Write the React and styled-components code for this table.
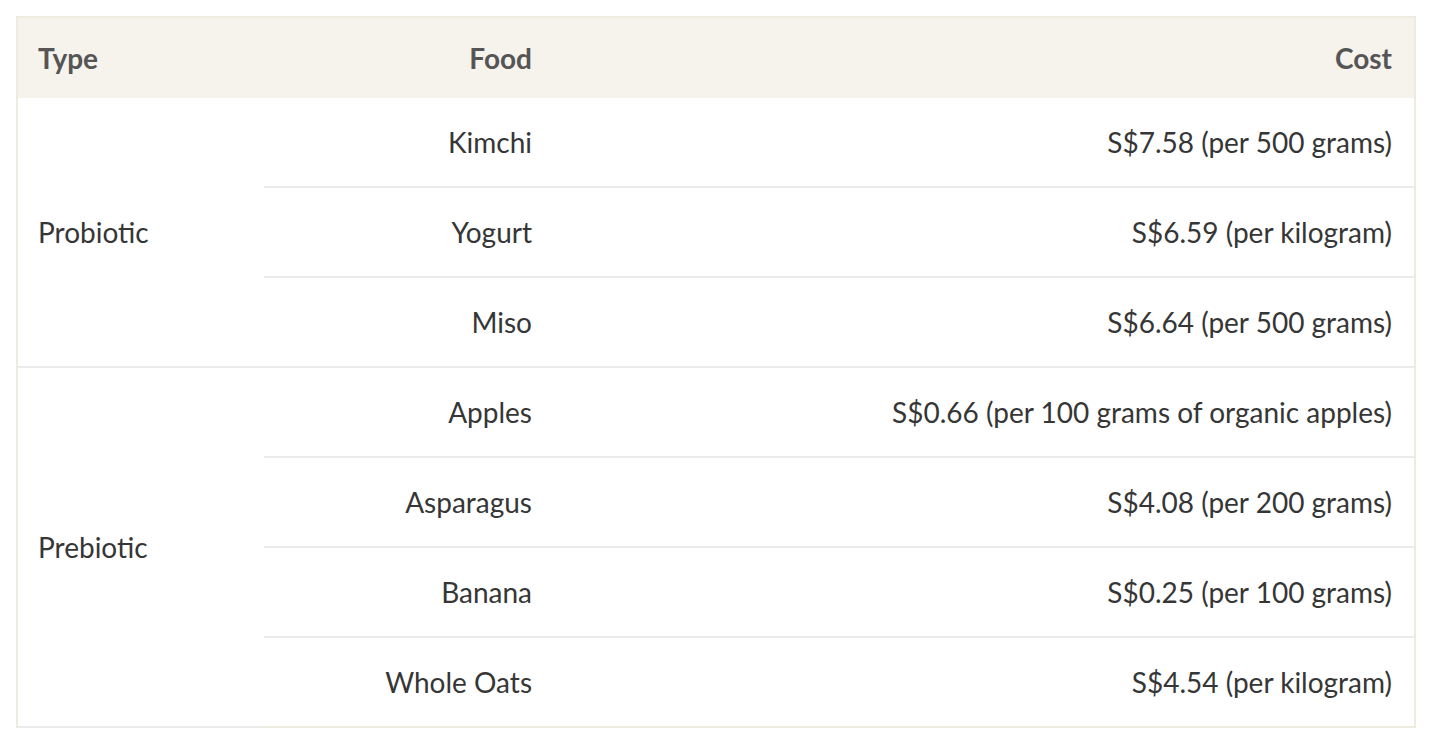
import React from "react";
import styled, { createGlobalStyle } from "styled-components";

const Global = createGlobalStyle`
  html, body { margin: 0; padding: 0; background: #ffffff; }
  body { font-family: Lato, "Noto Sans", "Liberation Sans", sans-serif; }
`;

const Page = styled.div`
  padding: 16px;
`;

const Table = styled.table`
  width: 1400px;
  border-collapse: collapse;
  border: 2px solid #eeebe1;
  table-layout: fixed;
  font-size: 28px;
  color: #363636;
`;

const Head = styled.th`
  background: #f5f3ec;
  height: 80px;
  padding: 0 22px 0 20px;
  font-weight: 700;
  color: #555555;
  text-align: ${(p) => p.$align || "left"};
  vertical-align: middle;
`;

const Cell = styled.td`
  height: 88px;
  padding: 0 22px 0 20px;
  border-bottom: 2px solid #ebebeb;
  text-align: ${(p) => p.$align || "left"};
  vertical-align: middle;
  white-space: nowrap;
`;

const Row = styled.tr`
  &:last-child > td {
    border-bottom: 0;
  }
`;

const groups = [
  {
    type: "Probiotic",
    items: [
      ["Kimchi", "S$7.58 (per 500 grams)"],
      ["Yogurt", "S$6.59 (per kilogram)"],
      ["Miso", "S$6.64 (per 500 grams)"],
    ],
  },
  {
    type: "Prebiotic",
    items: [
      ["Apples", "S$0.66 (per 100 grams of organic apples)"],
      ["Asparagus", "S$4.08 (per 200 grams)"],
      ["Banana", "S$0.25 (per 100 grams)"],
      ["Whole Oats", "S$4.54 (per kilogram)"],
    ],
  },
];

export default function App() {
  return (
    <>
      <Global />
      <Page>
        <Table>
          <colgroup>
            <col style={{ width: 247 }} />
            <col style={{ width: 290 }} />
            <col />
          </colgroup>
          <thead>
            <tr>
              <Head>Type</Head>
              <Head $align="right">Food</Head>
              <Head $align="right">Cost</Head>
            </tr>
          </thead>
          <tbody>
            {groups.map((g) =>
              g.items.map(([food, cost], i) => (
                <Row key={g.type + food}>
                  {i === 0 && <Cell rowSpan={g.items.length}>{g.type}</Cell>}
                  <Cell $align="right">{food}</Cell>
                  <Cell $align="right">{cost}</Cell>
                </Row>
              ))
            )}
          </tbody>
        </Table>
      </Page>
    </>
  );
}
